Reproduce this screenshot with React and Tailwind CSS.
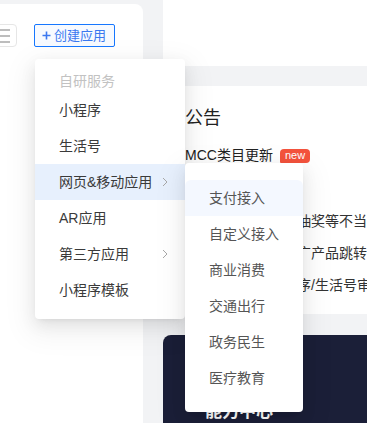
import React from 'react';

const mainItems = [
  { label: '小程序' },
  { label: '生活号' },
  { label: '网页&移动应用', sub: true, active: true },
  { label: 'AR应用' },
  { label: '第三方应用', sub: true },
  { label: '小程序模板' },
];

const subItems = ['支付接入', '自定义接入', '商业消费', '交通出行', '政务民生', '医疗教育'];

const notices = [
  '关于严禁违规利用抽奖等不当营销行为的公告',
  '规范小程序内部推广产品跳转的说明',
  '关于优化支付小程序/生活号审核规则',
];

const menuShadow =
  'shadow-[0_6px_16px_0_rgba(0,0,0,0.08),0_3px_6px_-4px_rgba(0,0,0,0.12),0_9px_28px_8px_rgba(0,0,0,0.05)]';

function Chevron() {
  return (
    <svg width="6" height="10" viewBox="0 0 6 10" fill="none">
      <polyline points="1,1 5,5 1,9" stroke="#a8a8a8" strokeWidth="1" />
    </svg>
  );
}

export default function App() {
  return (
    <div
      className="relative flex h-[423px] w-full overflow-hidden bg-[#f2f3f5]"
      style={{ fontFamily: '"Liberation Sans", "Noto Sans CJK SC", sans-serif' }}
    >
      {/* left panel */}
      <div className="mt-[4px] w-[143px] shrink-0 rounded-tr-lg bg-white">
        <div className="flex items-center pt-[20px]">
          <div className="ml-[-13px] flex h-[23px] w-[30px] flex-col items-end justify-center gap-[4px] rounded-[4px] border border-[#e6e6e6] pr-[6px]">
            <span className="block h-[2px] w-[22px] bg-[#bdbdbd]" />
            <span className="block h-[2px] w-[22px] bg-[#bdbdbd]" />
            <span className="block h-[2px] w-[22px] bg-[#bdbdbd]" />
          </div>
          <button className="ml-[17px] flex h-[23px] w-[81px] items-center gap-[3px] rounded-[2px] border border-[#1677ff] bg-[#f7faff] pl-[7px] text-[13px] leading-none text-[#3b78f0]">
            <svg width="9" height="9" viewBox="0 0 9 9">
              <path d="M4.5 0.5v8M0.5 4.5h8" stroke="#3b78f0" strokeWidth="1.6" />
            </svg>
            创建应用
          </button>
        </div>
      </div>

      {/* main column */}
      <div className="ml-[20px] flex flex-1 flex-col">
        <div className="h-[66px] bg-white" />
        <div className="mt-[20px] h-[230px] bg-white pl-[22px] pt-[20px] text-[#222]">
          <div className="h-[24px] text-[18px] leading-[24px]">公告</div>
          <div className="mt-[15px] flex h-[22px] items-center whitespace-nowrap text-[14px]">
            <span>MCC类目更新</span>
            <span className="ml-[7px] flex h-[14px] items-center rounded-[4px] rounded-bl-[1px] bg-[#f4533d] px-[5px] text-[11px] leading-none text-white">
              new
            </span>
          </div>
          <div className="mt-[43px] flex flex-col gap-[10px]">
            {notices.map((n) => (
              <div key={n} className="h-[22px] whitespace-nowrap text-[14px] leading-[22px] text-[#333]">
                {n}
              </div>
            ))}
          </div>
        </div>
        <div className="mt-[21px] flex-1 rounded-tl-lg bg-[#1b1f38] pl-[42px] pt-[66px]">
          <div className="whitespace-nowrap text-[17px] font-bold leading-[22px] text-white">能力中心</div>
        </div>
      </div>

      {/* dropdown */}
      <div className={`absolute left-[35px] top-[59px] w-[150px] rounded-[4px] bg-white pb-[11px] pt-[11px] ${menuShadow}`}>
        <div className="flex h-[22px] items-center pl-[24px] text-[14px] text-[#c2c2c2]">自研服务</div>
        {mainItems.map((it) => (
          <div
            key={it.label}
            className={`flex h-9 items-center justify-between pl-[24px] pr-[17px] text-[14px] text-[#3a3a3a] ${
              it.active ? 'bg-[#e7f0fd]' : ''
            }`}
          >
            <span className="whitespace-nowrap">{it.label}</span>
            {it.sub && <Chevron />}
          </div>
        ))}
      </div>

      {/* submenu */}
      <div className={`absolute left-[185px] top-[163px] h-[249px] w-[118px] rounded-[4px] bg-white pt-[17px] ${menuShadow}`}>
        {subItems.map((s, i) => (
          <div
            key={s}
            className={`flex h-9 items-center pl-[24px] text-[14px] text-[#555] ${
              i === 0 ? 'rounded-t-[6px] bg-[#f4f8ff]' : ''
            }`}
          >
            {s}
          </div>
        ))}
      </div>
    </div>
  );
}
